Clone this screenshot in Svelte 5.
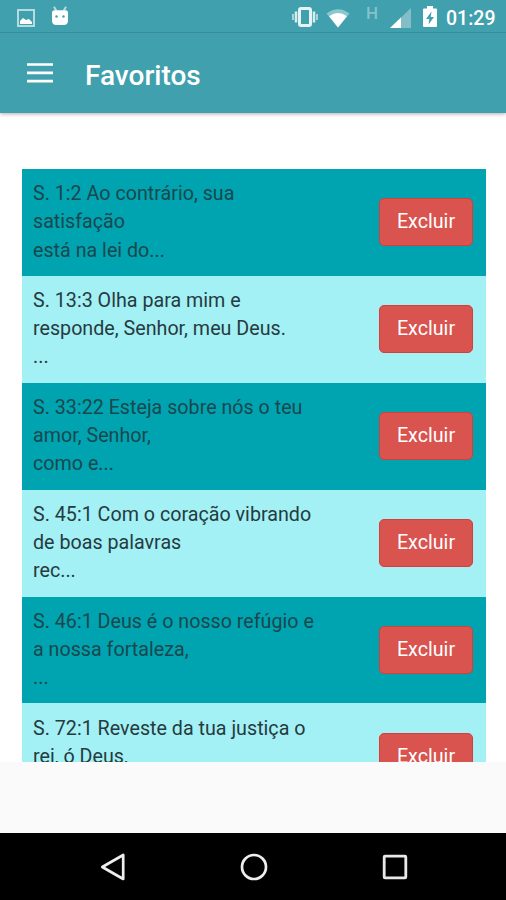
<script>
  const favorites = [
    ['S. 1:2 Ao contrário, sua', 'satisfação', 'está na lei do...'],
    ['S. 13:3 Olha para mim e', 'responde, Senhor, meu Deus.', '...'],
    ['S. 33:22 Esteja sobre nós o teu', 'amor, Senhor,', 'como e...'],
    ['S. 45:1 Com o coração vibrando', 'de boas palavras', 'rec...'],
    ['S. 46:1 Deus é o nosso refúgio e', 'a nossa fortaleza,', '...'],
    ['S. 72:1 Reveste da tua justiça o', 'rei, ó Deus,']
  ];
</script>

<div class="screen">
  <header>
    <div class="status">
      <svg class="image" width="18" height="18" viewBox="0 0 18 18">
        <rect x="1" y="1" width="16" height="16" fill="none" stroke="#b4dce0" stroke-width="2" />
        <path d="M3 15v-3l3-3 3 2 3-1 3 3v2z" fill="#fff" />
      </svg>
      <svg class="robot" width="18" height="20" viewBox="0 0 18 20">
        <path d="M3 .8l2.300 4M15 .8l-2.300 4" stroke="#b4dce0" stroke-width="2" />
        <path d="M3.500 4.200h11Q17 4.200 17 7v7.500q0 4.500-4.500 4.500h-7Q1 19 1 14.500V7q0-2.800 2.500-2.800z" fill="#fff" />
        <circle cx="5.500" cy="10.500" r="1.200" fill="#41a0ad" />
        <circle cx="12.500" cy="10.500" r="1.200" fill="#41a0ad" />
      </svg>
      <span class="spacer"></span>
      <svg class="vibrate" width="26" height="20" viewBox="0 0 26 20">
        <rect x="7.500" y="1.500" width="11" height="17" rx="1.500" fill="none" stroke="#e4f4f5" stroke-width="3" />
        <path d="M4 4.500v11M22 4.500v11" stroke="#d8edef" stroke-width="2.500" />
        <path d="M1 7v6M25 7v6" stroke="#a9d5da" stroke-width="2" />
      </svg>
      <svg class="wifi" width="24" height="20" viewBox="0 0 25 20">
        <path d="M.5 5.200Q12.500-3.600 24.500 5.200L12.500 20z" fill="#8bc7ce" />
        <path d="M3.200 8.300Q12.500 1.500 21.800 8.300L12.500 20z" fill="#fff" />
      </svg>
      <span class="network">H</span>
      <svg class="signal" width="21" height="20" viewBox="0 0 21 20">
        <path d="M21 0v20H0z" fill="#83bec8" />
        <path d="M11 9.500V20H0z" fill="#fff" />
      </svg>
      <svg class="battery" width="14" height="21" viewBox="0 0 14 21">
        <path d="M4 0h6v2.500h3q1 0 1 1V20q0 1-1 1H1q-1 0-1-1V3.500q0-1 1-1h3z" fill="#fff" />
        <path d="M8.500 5.500L3 13h3.300L5.500 18.500 11 11H7.700z" fill="#41a0ad" />
      </svg>
      <span class="time">01:29</span>
    </div>
    <div class="toolbar">
      <svg width="26" height="20" viewBox="0 0 26 20">
        <path d="M0 1.500h26M0 9.800h26M0 18.100h26" stroke="#fff" stroke-width="2.700" />
      </svg>
      <h1>Favoritos</h1>
    </div>
  </header>

  <main>
    <ul>
      {#each favorites as lines}
        <li>
          <p>
            {#each lines as line}<span>{line}</span>{/each}
          </p>
          <button>Excluir</button>
        </li>
      {/each}
    </ul>
  </main>

  <div class="blank"></div>

  <nav>
    <svg width="26" height="28" viewBox="0 0 26 28">
      <path d="M23.200 2v24L2.300 14z" fill="none" stroke="#eee" stroke-width="2.700" stroke-linejoin="round" />
    </svg>
    <svg width="28" height="28" viewBox="0 0 28 28">
      <circle cx="14" cy="14" r="12" fill="none" stroke="#eee" stroke-width="2.700" />
    </svg>
    <svg width="26" height="26" viewBox="0 0 26 26">
      <rect x="2.200" y="2.200" width="21.600" height="21.600" rx=".8" fill="none" stroke="#e8e8e8" stroke-width="2.800" />
    </svg>
  </nav>
</div>

<style>
  .screen {
    width: 506px;
    height: 900px;
    display: flex;
    flex-direction: column;
    overflow: hidden;
    background: #fff;
    font-family: Roboto, "Liberation Sans", sans-serif;
  }
  svg { display: block; flex: none; }
  header {
    flex: none;
    height: 113px;
    background: #41a0ad;
    box-shadow: 0 1px 4px rgba(70, 40, 50, 0.4);
    color: #fff;
    z-index: 1;
  }
  .status {
    box-sizing: border-box;
    height: 33px;
    display: flex;
    align-items: flex-start;
    padding: 8px 11px 0 17px;
    border-bottom: 1px solid #388c99;
  }
  .image { margin-top: 1px; }
  .robot { margin: -2px 0 0 16px; }
  .spacer { flex: 1; }
  .vibrate { margin-top: -1px; }
  .wifi { margin: 0 0 0 8px; }
  .network {
    width: 13px;
    margin: -4px 0 0 16px;
    font-size: 17px;
    line-height: 18px;
    font-weight: 500;
    color: #83c3cc;
  }
  .signal { margin-left: 11px; }
  .battery { margin: -2px 0 0 12px; }
  .time {
    width: 49px;
    margin: 0 0 0 9px;
    font-size: 19.500px;
    line-height: 22px;
    font-weight: 500;
    white-space: nowrap;
  }
  .toolbar {
    display: flex;
    align-items: center;
    height: 80px;
    padding-left: 27px;
    box-sizing: border-box;
  }
  h1 {
    margin: 5px 0 0 32px;
    font-size: 28px;
    line-height: 32px;
    font-weight: 500;
  }
  main {
    flex: none;
    box-sizing: border-box;
    height: 649px;
    padding: 56px 20px 0 22px;
    overflow: hidden;
  }
  ul { margin: 0; padding: 0; list-style: none; }
  li {
    box-sizing: border-box;
    height: 106.900px;
    display: flex;
    justify-content: space-between;
    align-items: flex-start;
    padding: 11.200px 13px 0 11px;
    background: #a3f0f5;
    color: #263b40;
  }
  li:nth-child(odd) { background: #00a3b0; }
  li:nth-child(odd) p { color: #1b484e; }
  p {
    margin: 0;
    font-size: 19.700px;
    line-height: 28.150px;
    white-space: nowrap;
  }
  p span { display: block; }
  button {
    flex: none;
    box-sizing: border-box;
    width: 94px;
    height: 48px;
    margin-top: 18px;
    padding: 0 0 1px;
    border: 1px solid #d43f3a;
    border-radius: 5px;
    background: #d9534f;
    color: #fff;
    font: 400 19.700px Roboto, "Liberation Sans", sans-serif;
  }
  .blank { flex: none; height: 71px; background: #fafafa; }
  nav {
    flex: 1;
    display: flex;
    align-items: center;
    gap: 114px;
    padding: 0 0 0 100px;
    background: #000;
  }
</style>
